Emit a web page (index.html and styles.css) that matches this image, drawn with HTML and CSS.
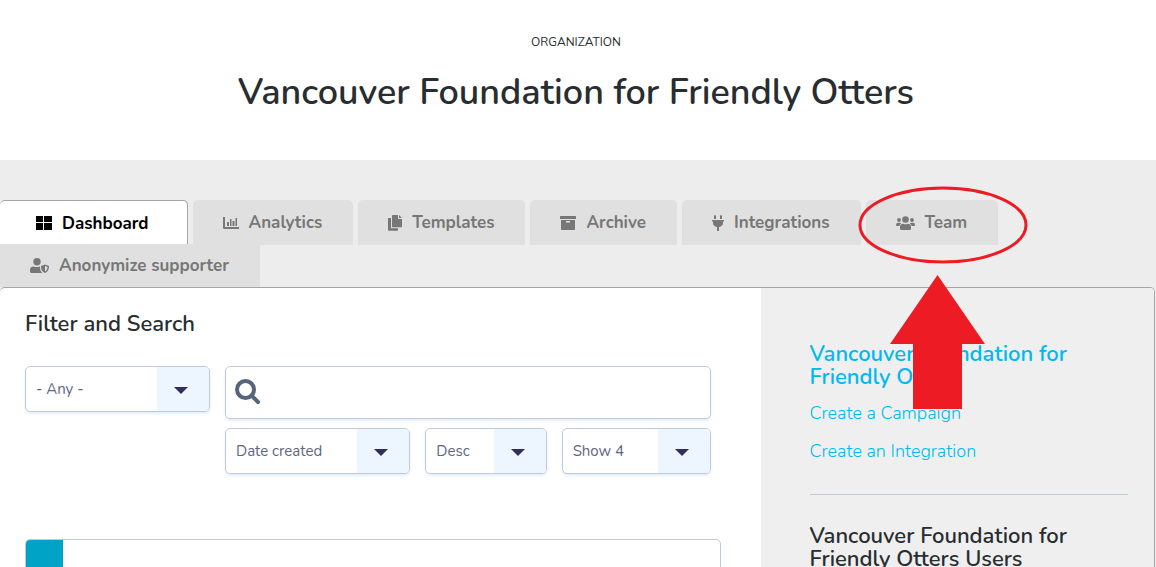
FILE: index.html
```html
<!DOCTYPE html>
<html lang="en">
<head>
    <meta charset="UTF-8">
    <meta name="viewport" content="width=device-width, initial-scale=1.0">
    <title>Vancouver Foundation for Friendly Otters</title>
    <link rel="stylesheet" href="styles.css">
</head>
<body>
    <header class="page-header">
        <p class="page-type">Organization</p>
        <h1>Vancouver Foundation for Friendly Otters</h1>
    </header>

    <nav class="tabs-wrapper">
        <ul class="tabs">
            <li class="tab active">
                <a href="#dashboard">
                    <svg width="16" height="14" viewBox="0 0 16 14"><path d="M0 0h7v6H0zM8 0h8v6H8zM0 7h7v7H0zM8 7h8v7H8z"/></svg>
                    Dashboard
                </a>
            </li>
            <li class="tab">
                <a href="#analytics">
                    <svg width="16" height="12" viewBox="0 0 16 12"><path d="M0 0h2v10h14v2H1.200Q0 12 0 10.800zM4 5h2v4H4zM7 2h1.500v7H7zM9.500 4h2v5h-2zM12.500 1h1.500v8h-1.500z"/></svg>
                    Analytics
                </a>
            </li>
            <li class="tab">
                <a href="#templates">
                    <svg width="14" height="16" viewBox="0 0 14 16"><path d="M0 3h3v10.200h7V15q0 .8-.8.8H.8Q0 15.800 0 15zM4 .8Q4 0 4.800 0H10v4h4v7.500q0 .8-.8.800H4.800q-.8 0-.8-.8zM11 0l3 3h-3z"/></svg>
                    Templates
                </a>
            </li>
            <li class="tab">
                <a href="#archive">
                    <svg width="16" height="14" viewBox="0 0 16 14"><path fill-rule="evenodd" d="M.5 0h15q.5 0 .5.500V3H0V.500Q0 0 .5 0zM1 4h14v9.200q0 .8-.8.800H1.800q-.8 0-.8-.8zM6 5v1.500h4V5z"/></svg>
                    Archive
                </a>
            </li>
            <li class="tab">
                <a href="#integrations">
                    <svg width="12" height="16" viewBox="0 0 12 16"><path d="M2 1q1-2 2 0v3H2zM8 1q1-2 2 0v3H8zM.5 5h11q.5 0 .5.500v.500q0 .5-.5.500H11V8q0 3-4 4v4H5v-4Q1 11 1 8V6.500H.5Q0 6.500 0 6v-.5Q0 5 .5 5z"/></svg>
                    Integrations
                </a>
            </li>
            <li class="tab">
                <a href="#team">
                    <svg width="19" height="14" viewBox="0 0 19 14"><circle cx="3" cy="4" r="1.900"/><circle cx="16" cy="4" r="1.900"/><circle cx="9.500" cy="3.500" r="3.300"/><path d="M0 9q0-2.200 2-2.200h1.800q.9 0 1.400.6Q3.700 8.300 3.400 10H.8Q0 10 0 9zM19 9q0-2.200-2-2.200h-1.800q-.9 0-1.400.6 1.500.9 1.800 2.600h2.600q.8 0 .8-1zM4 12.800V11q0-3.200 3.300-3.200 2.200 1 4.400 0Q15 7.800 15 11v1.800q0 1.200-1.200 1.200H5.200Q4 14 4 12.800z"/></svg>
                    Team
                </a>
                <!-- Callout pointing at the team tab -->
                <svg class="callout" width="170" height="224" viewBox="0 0 170 224">
                    <ellipse cx="85" cy="39" rx="83" ry="37"/>
                    <path d="M79.500 89L127 158h-23v65H55v-65H32z"/>
                </svg>
            </li>
            <li class="tab tab-last">
                <a href="#anonymize">
                    <svg width="19" height="15" viewBox="0 0 19 15"><circle cx="7" cy="3.700" r="3.700"/><path d="M0 13.600V12q0-3.500 3.600-3.600Q7 9.500 9.600 8.400h.4q-.4 4.200 2.400 6.600H1.400Q0 15 0 13.600z"/><path fill-rule="evenodd" d="M15 6.500l4 1.500q.3 5-4 7-4.300-2-4-7zM15 8v5.400q2.600-1.600 2.600-4.500z"/></svg>
                    Anonymize supporter
                </a>
            </li>
        </ul>
    </nav>

    <div class="panel">
        <main class="content">
            <h2>Filter and Search</h2>
            <form class="filters">
                <div class="select filter-type">
                    <select aria-label="Type"><option>- Any -</option></select>
                </div>
                <div class="filter-main">
                    <div class="search">
                        <svg width="26" height="26" viewBox="0 0 26 26"><circle cx="10.500" cy="10.500" r="8.500"/><path d="M17 17l6 6"/></svg>
                        <input type="search" aria-label="Search">
                    </div>
                    <div class="sort-row">
                        <div class="select sort-field">
                            <select aria-label="Sort by"><option>Date created</option></select>
                        </div>
                        <div class="select sort-order">
                            <select aria-label="Order"><option>Desc</option></select>
                        </div>
                        <div class="select sort-count">
                            <select aria-label="Items per page"><option>Show 4</option></select>
                        </div>
                    </div>
                </div>
            </form>
            <article class="card">
                <div class="card-flag"></div>
            </article>
        </main>

        <aside class="sidebar">
            <h3><a href="#organization">Vancouver Foundation for Friendly Otters</a></h3>
            <ul class="side-links">
                <li><a href="#campaign">Create a Campaign</a></li>
                <li><a href="#integration">Create an Integration</a></li>
            </ul>
            <hr>
            <h3>Vancouver Foundation for Friendly Otters Users</h3>
        </aside>
    </div>
</body>
</html>
```
FILE: styles.css
```css
* {
    margin: 0;
    padding: 0;
    box-sizing: border-box;
}

body {
    font-family: Nunito, Lato, sans-serif;
    font-size: 16px;
    color: #282d30;
    background: #ededed;
}

a {
    color: #00b9f1;
    text-decoration: none;
}

ul {
    list-style: none;
}

.page-header {
    background: #fff;
    text-align: center;
    padding: 32px 24px 43px 20px;
}

.page-type {
    font-size: 12px;
    line-height: 20px;
    text-transform: uppercase;
}

h1 {
    font-size: 36px;
    font-weight: 600;
    line-height: 48px;
    margin-top: 17px;
}

.tabs-wrapper {
    padding-top: 40px;
}

.tabs {
    display: flex;
    flex-wrap: wrap;
    column-gap: 5px;
    padding-right: 100px;
}

.tab {
    position: relative;
    height: 44px;
}

.tab a {
    display: flex;
    align-items: center;
    gap: 10px;
    height: 45px;
    padding: 0 31px 0 30px;
    background: #e0e0e0;
    border-radius: 5px 5px 0 0;
    color: #777;
    font-size: 17px;
    font-weight: 700;
}

.tab a svg {
    fill: currentColor;
}

.tab.active a {
    padding: 0 38px 0 36px;
    background: #fff;
    border: 1px solid #a5a5a5;
    border-width: 1px 1px 0 0;
    color: #000;
}

.tab-last {
    height: 43px;
}

.tab-last a {
    height: 43px;
    border-radius: 0;
}

.callout {
    position: absolute;
    left: -8px;
    top: -14px;
    z-index: 2;
    pointer-events: none;
}

.callout ellipse {
    fill: none;
    stroke: #ed1c24;
    stroke-width: 3px;
}

.callout path {
    fill: #ed1c24;
}

.panel {
    display: flex;
    margin-right: 1px;
    border: 1px solid #a5a5a5;
    border-left: none;
    border-radius: 5px;
    background: #fff;
    overflow: hidden;
}

.content {
    flex: 1;
    padding: 22px 40px 24px 25px;
}

h2 {
    font-size: 22px;
    font-weight: 600;
    line-height: 28px;
}

.filters {
    display: flex;
    align-items: flex-start;
    gap: 15px;
    margin: 28px 10px 65px 0;
}

.filter-type {
    width: 185px;
}

.filter-main {
    flex: 1;
}

.select,
.search {
    position: relative;
    border: 1px solid #c1cada;
    border-radius: 5px;
    background: #fff;
    box-shadow: 0 2px 3px #e4eefa;
}

.select {
    height: 46px;
    overflow: hidden;
}

.select select {
    appearance: none;
    width: 100%;
    height: 44px;
    padding: 0 62px 0 10px;
    border: none;
    background: linear-gradient(#edf5ff, #edf5ff) right / 52px 100% no-repeat;
    color: #5d6780;
    font-family: inherit;
    font-size: 15px;
}

.select::after {
    content: "";
    position: absolute;
    right: 21px;
    top: 20px;
    border: 7px solid transparent;
    border-top-color: #2e2f5b;
    border-bottom: none;
    pointer-events: none;
}

.search {
    display: flex;
    align-items: center;
    gap: 10px;
    height: 53px;
    padding: 0 10px 2px 9px;
}

.search svg {
    flex: none;
    fill: none;
    stroke: #56657a;
    stroke-width: 4px;
    stroke-linecap: round;
}

.search input {
    flex: 1;
    min-width: 0;
    border: none;
    outline: none;
    font-family: inherit;
    font-size: 15px;
}

.sort-row {
    display: flex;
    gap: 15px;
    margin-top: 9px;
}

.sort-field {
    flex: 186;
}

.sort-order {
    flex: 121;
}

.sort-count {
    flex: 149;
}

.card {
    height: 180px;
    border: 1px solid #c1cada;
    border-radius: 5px;
    overflow: hidden;
}

.card-flag {
    width: 37px;
    height: 37px;
    background: #00a2c5;
}

.sidebar {
    flex: 0 0 34.1%;
    padding: 55px 26px 24px 49px;
    background: #efefef;
}

h3 {
    font-size: 22px;
    font-weight: 600;
    line-height: 23px;
}

.side-links {
    margin: 5px 0 24px;
}

.side-links li {
    font-size: 18px;
    font-weight: 300;
    line-height: 38px;
}

.sidebar hr {
    border: none;
    border-top: 1px solid #c1cada;
    margin-bottom: 30px;
}
```
